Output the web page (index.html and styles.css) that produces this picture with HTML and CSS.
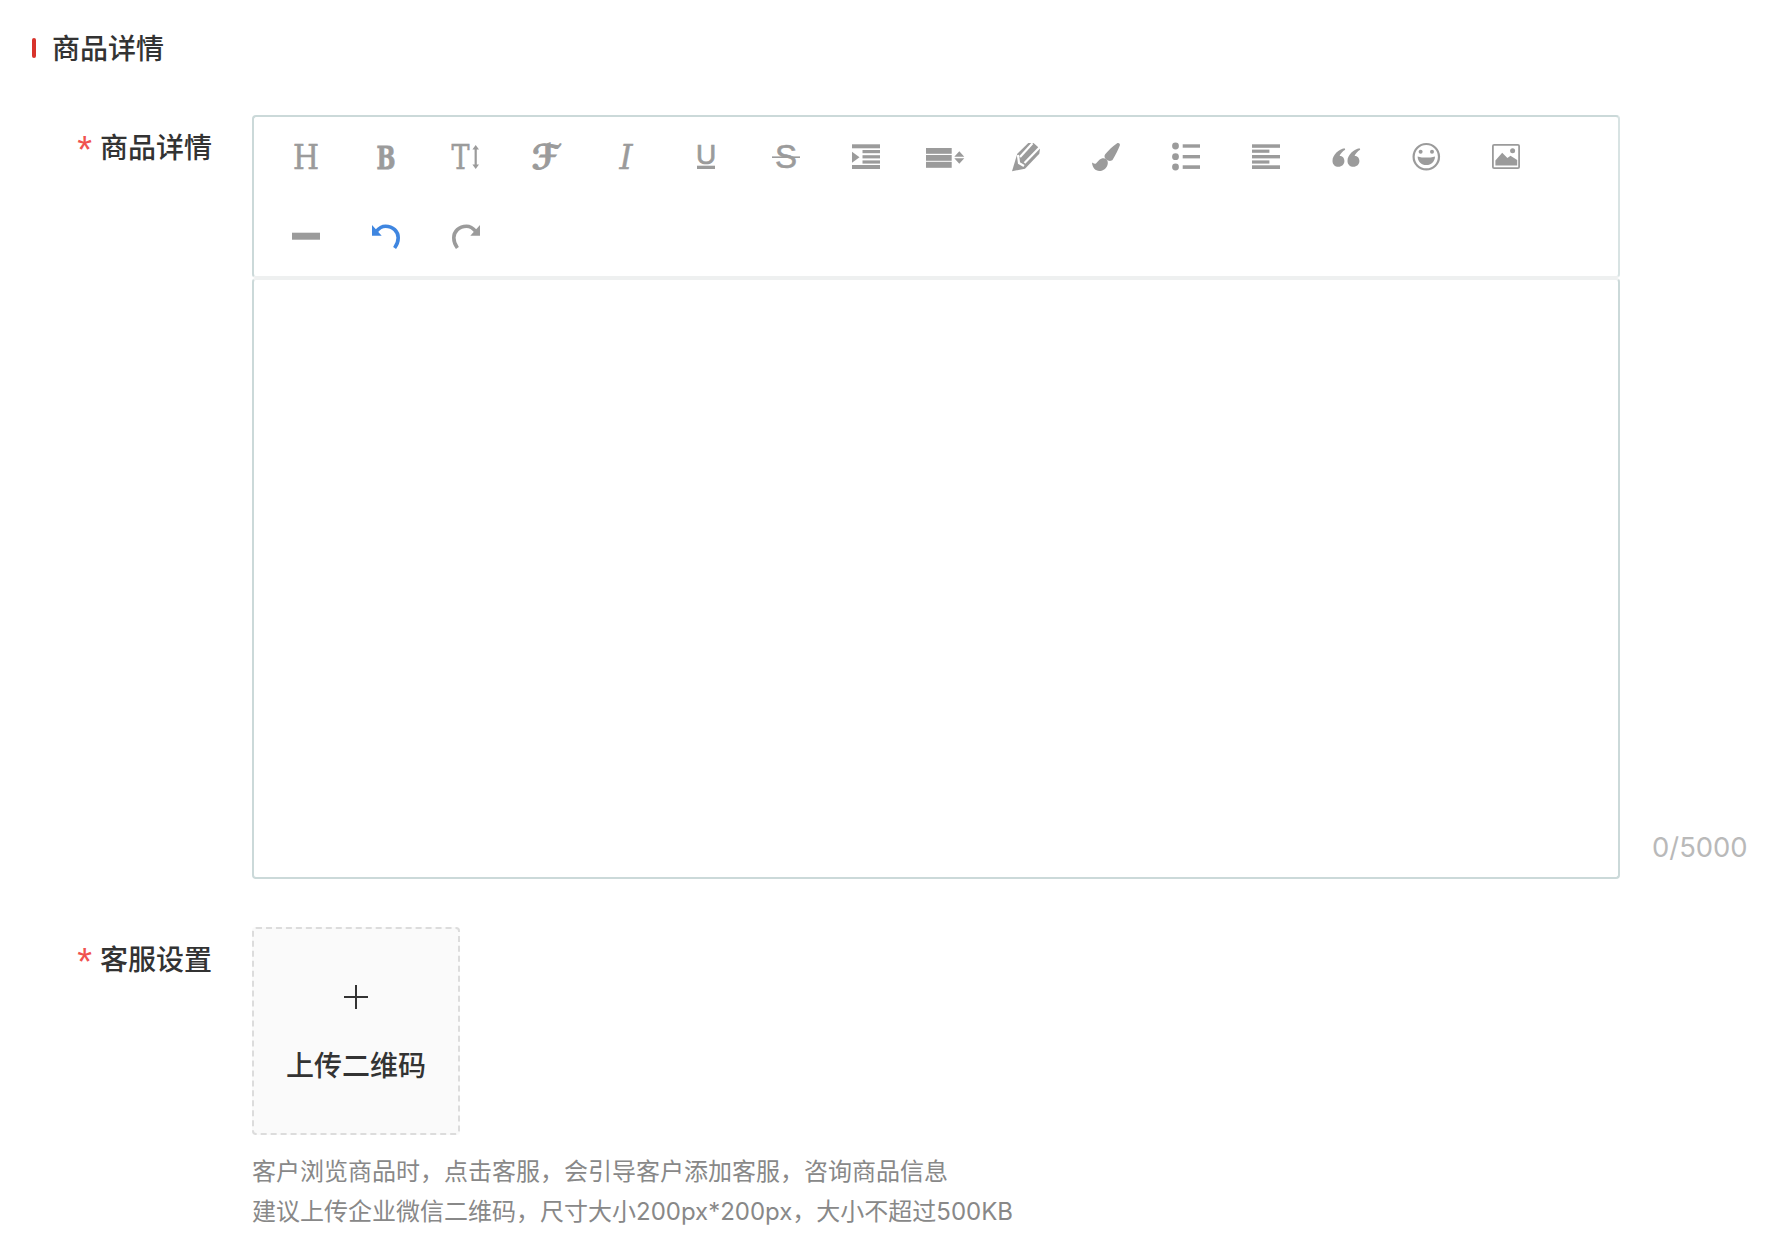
FILE: index.html
```html
<!DOCTYPE html>
<html lang="zh-CN">
<head>
<meta charset="utf-8">
<title>商品详情</title>
<link rel="stylesheet" href="styles.css">
</head>
<body>
<h2 class="section-title"><span class="title-bar"></span>商品详情</h2>

<div class="form-row form-row-editor">
  <div class="form-label"><span class="star">*</span>商品详情</div>
  <div class="editor">
    <div class="toolbar">
      <button class="tool"><svg class="icon" viewBox="0 0 28 28"><text class="g g-h" x="14" y="26" text-anchor="middle" textLength="26" lengthAdjust="spacingAndGlyphs">H</text></svg></button>
      <button class="tool"><svg class="icon" viewBox="0 0 28 28"><text class="g g-b" x="14" y="26" text-anchor="middle" textLength="19" lengthAdjust="spacingAndGlyphs">B</text></svg></button>
      <button class="tool"><svg class="icon" viewBox="0 0 28 28"><text class="g g-t" x="8.6" y="26" text-anchor="middle" textLength="18" lengthAdjust="spacingAndGlyphs">T</text><path d="M23.7 2 27 6.6H24.8V21.4H27L23.7 26 20.4 21.4H22.6V6.6H20.4Z"/></svg></button>
      <button class="tool"><svg class="icon" viewBox="0 0 28 28"><text class="g g-f" x="13.5" y="25.5" text-anchor="middle">ℱ</text></svg></button>
      <button class="tool"><svg class="icon" viewBox="0 0 28 28"><text class="g g-i" x="14" y="26" text-anchor="middle">I</text></svg></button>
      <button class="tool"><svg class="icon" viewBox="0 0 28 28"><text class="g g-u" x="14" y="21" text-anchor="middle">U</text><rect x="5" y="22.7" width="18" height="3.3"/></svg></button>
      <button class="tool"><svg class="icon" viewBox="0 0 28 28"><text class="g g-s" x="14" y="25.4" text-anchor="middle">S</text><rect x="0" y="13.4" width="28" height="1.6"/></svg></button>
      <button class="tool"><svg class="icon" viewBox="0 0 28 28"><rect y="1.3" width="28" height="4"/><rect x="10.5" y="7" width="17.5" height="3.2"/><rect x="10.5" y="12.2" width="17.5" height="3.2"/><rect x="10.5" y="17.4" width="17.5" height="3.2"/><rect y="22" width="28" height="4"/><path d="M0 8.7 7.5 14.2 0 19.7Z"/></svg></button>
      <button class="tool"><svg class="icon icon-wide" viewBox="0 0 40 28"><rect y="5" width="25.7" height="5.8"/><rect y="12" width="25.7" height="5.8"/><rect y="18.8" width="25.7" height="6"/><path d="M33.3 8.3 38.3 13.7H28.3ZM28.3 15.3H38.3L33.3 20.7Z"/></svg></button>
      <button class="tool"><svg class="icon" viewBox="0 0 28 28"><path d="M0 28.3 5.3 10.7 16.3 0H21.5L28 5.7 27.3 10.7 13 25.7Z"/><path class="stripe" d="M20.5 .3 8 14"/><path class="stripe" d="M27.5 4.5 12.5 20"/><path class="stripe" d="M6 12 7 20 12 23"/></svg></button>
      <button class="tool"><svg class="icon" viewBox="0 0 28 28"><path d="M24.8.4C26.6-.6 28.5.6 27.8 2.6 26 7 23.6 12 20.8 16.6 19.6 18.6 16.4 18.5 14.2 16.6 12.2 14.9 12 12.6 13.4 11 16.6 7.2 20.8 3 24.8.4Z"/><path d="M9.7 15.6C12.6 14.4 16.2 17 15.8 20.4 15.4 24.6 11.4 28 7.4 28 3.4 28 .4 25 0 19.6 1.2 20.6 2.8 21 4 20.4 5.6 19.4 6.6 16.8 9.7 15.6Z"/></svg></button>
      <button class="tool"><svg class="icon" viewBox="0 0 28 28"><circle cx="3.5" cy="3" r="3.4"/><circle cx="3.5" cy="13.7" r="3.4"/><circle cx="3.5" cy="24" r="3.4"/><rect x="10.7" y="1.3" width="17.3" height="3.4"/><rect x="10.7" y="12" width="17.3" height="3.4"/><rect x="10.7" y="22.3" width="17.3" height="3.6"/></svg></button>
      <button class="tool"><svg class="icon" viewBox="0 0 28 28"><rect y="1.3" width="28" height="3.5"/><rect y="6.6" width="17.4" height="3.2"/><rect y="12" width="28" height="3.4"/><rect y="17.4" width="17.4" height="3.2"/><rect y="22.3" width="28" height="3.7"/></svg></button>
      <button class="tool"><svg class="icon" viewBox="0 0 28 28"><path d="M12.6 5.3C7 6.5.5 11.5.5 18 .5 21.5 3 23.8 6.4 23.8 9.8 23.8 12.4 21.4 12.4 18 12.4 14.8 10 12.8 7.6 13 8.4 10.8 10.4 8.4 13.2 6.8Z"/><path d="M27.6 5.3C22 6.5 15.5 11.5 15.5 18 15.5 21.5 18 23.8 21.4 23.8 24.8 23.8 27.4 21.4 27.4 18 27.4 14.8 25 12.8 22.6 13 23.4 10.8 25.4 8.4 28.2 6.8Z"/></svg></button>
      <button class="tool"><svg class="icon" viewBox="0 0 28 28"><circle class="line" cx="14.3" cy="13.7" r="12.7"/><circle cx="8.6" cy="8.7" r="2"/><circle cx="20" cy="8.7" r="2"/><path d="M5.6 13.4C11 15 17.6 15 23 13.4 22.8 18.8 19.2 22 14.3 22 9.4 22 5.8 18.8 5.6 13.4Z"/></svg></button>
      <button class="tool"><svg class="icon" viewBox="0 0 28 28"><rect class="line-thin" x=".9" y="1.8" width="26.2" height="23.4" rx="1.2"/><path d="M3.4 22.5V17.6L10.2 9.8 15.4 15 18.5 12.8 25.2 17V22.5Z"/><circle cx="20.6" cy="7.7" r="2.5"/></svg></button>
      <button class="tool"><svg class="icon" viewBox="0 0 28 28"><rect y="9.7" width="28" height="7"/></svg></button>
      <button class="tool tool-active"><svg class="icon" viewBox="0 0 28 28"><path d="M0 2 9.7 12.7H0Z"/><path class="arc" d="M4.5 8.2C7 5 10 3.2 13.5 3.2 21 3.2 26.2 8.4 26.2 14.8 26.2 18.4 25 21.8 22.6 25"/></svg></button>
      <button class="tool"><svg class="icon" viewBox="0 0 28 28"><path d="M28 2 18.3 12.7H28Z"/><path class="arc" d="M23.5 8.2C21 5 18 3.2 14.5 3.2 7 3.2 1.8 8.4 1.8 14.8 1.8 18.4 3 21.8 5.4 25"/></svg></button>
    </div>
    <div class="editor-body"></div>
  </div>
  <div class="counter">0/5000</div>
</div>

<div class="form-row form-row-service">
  <div class="form-label"><span class="star">*</span>客服设置</div>
  <div class="service-col">
    <div class="upload">
      <svg class="plus" viewBox="0 0 24 24"><rect x="11" y="0" width="2" height="24"/><rect x="0" y="11" width="24" height="2"/></svg>
      <div class="upload-text">上传二维码</div>
    </div>
    <p class="hint">客户浏览商品时，点击客服，会引导客户添加客服，咨询商品信息<br>建议上传企业微信二维码，尺寸大小200px*200px，大小不超过500KB</p>
  </div>
</div>
</body>
</html>
```
FILE: styles.css
```css
* { box-sizing: border-box; }
html, body { margin: 0; padding: 0; background: #fff; }
body {
  width: 1782px;
  min-height: 1242px;
  font-family: "Noto Sans CJK SC", "Noto Sans", sans-serif;
  color: #333;
  overflow: hidden;
}
.section-title {
  display: flex;
  align-items: center;
  margin: 27px 0 0;
  padding-left: 32px;
  height: 40px;
  font-size: 28px;
  line-height: 40px;
  font-weight: 500;
}
.title-bar {
  position: relative;
  top: 1px;
  width: 4px;
  height: 20px;
  margin-right: 16px;
  border-radius: 2px;
  background: #d8332c;
}
.form-row { display: flex; align-items: flex-start; }
.form-row-editor { margin-top: 48px; }
.form-row-service { margin-top: 48px; }
.form-label {
  width: 252px;
  flex: none;
  margin-top: 11px;
  padding-right: 40px;
  text-align: right;
  font-size: 28px;
  line-height: 40px;
  font-weight: 500;
}
.star {
  margin-right: 8px;
  color: #f0524f;
  font-family: "Liberation Sans", sans-serif;
  font-size: 38px;
  line-height: 0;
  vertical-align: -5px;
}
.editor { width: 1368px; flex: none; }
.toolbar {
  display: grid;
  grid-template-columns: repeat(16, 80px);
  grid-auto-rows: 80px;
  height: 163px;
  padding-left: 12px;
  border: 2px solid #cbd9d9;
  border-bottom-color: #eef0f0;
  border-right-color: #d8e3e3;
  border-radius: 4px;
}
.tool {
  display: flex;
  align-items: center;
  justify-content: center;
  margin: 0;
  padding: 0;
  border: 0;
  background: none;
  color: #9b9b9b;
  font: inherit;
}
.tool-active { color: #3f86e0; }
.icon {
  display: block;
  width: 28px;
  height: 28px;
  fill: currentColor;
  overflow: visible;
}
.icon-wide { width: 40px; }
.g { fill: currentColor; stroke: currentColor; }
.g-h { font: 400 33px "DejaVu Serif", serif; stroke-width: .6; }
.g-b { font: 700 32px "DejaVu Serif", serif; stroke-width: .8; }
.g-t { font: 400 33px "DejaVu Serif", serif; stroke-width: .6; }
.g-f { font: 700 34px "DejaVu Serif", "DejaVu Sans", serif; stroke-width: 1; }
.g-i { font: italic 400 33px "DejaVu Serif", serif; stroke-width: .4; }
.g-u { font: 400 28px "Liberation Sans", sans-serif; stroke-width: .7; }
.g-s { font: 400 33px "Liberation Sans", sans-serif; stroke-width: .6; }
.line { fill: none; stroke: currentColor; stroke-width: 2.2; }
.line-thin { fill: none; stroke: currentColor; stroke-width: 1.8; }
.arc { fill: none; stroke: currentColor; stroke-width: 3.6; }
.stripe { fill: none; stroke: #fff; stroke-width: 2.2; }
.editor-body {
  height: 601px;
  border: 2px solid #cbd9d9;
  border-top-color: #eef0f0;
  border-radius: 4px;
}
.counter {
  align-self: flex-end;
  margin-left: 32px;
  padding-bottom: 12px;
  color: #b9b9b9;
  font-family: "Inter", "Liberation Sans", sans-serif;
  font-size: 27.4px;
  line-height: 40px;
}
.service-col { flex: none; }
.upload {
  display: flex;
  flex-direction: column;
  align-items: center;
  width: 208px;
  height: 208px;
  padding-top: 56px;
  border: 2px dashed #dcdcdc;
  border-radius: 4px;
  background: #fafafa;
}
.plus { display: block; width: 24px; height: 24px; fill: #333; }
.upload-text {
  margin-top: 35px;
  font-size: 28px;
  line-height: 40px;
  font-weight: 500;
}
.hint {
  margin: 17px 0 0;
  color: #888;
  font-family: "Inter", "Noto Sans CJK SC", sans-serif;
  font-size: 24px;
  line-height: 40px;
}
```
